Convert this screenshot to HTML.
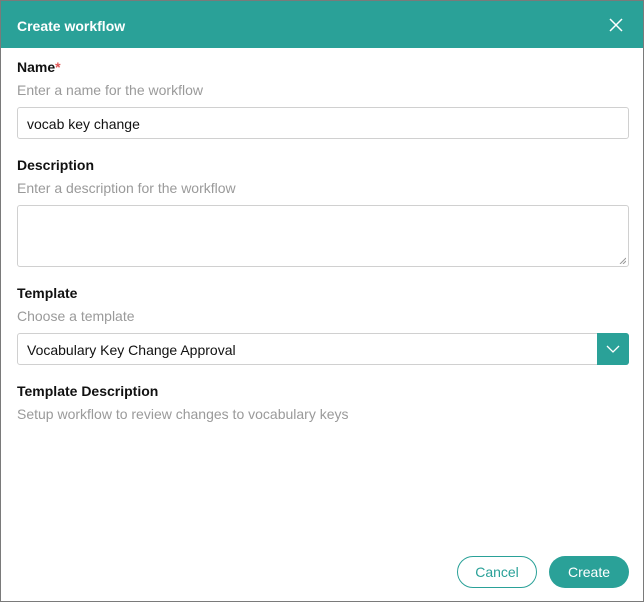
<!DOCTYPE html>
<html><head><meta charset="utf-8"><style>
*{box-sizing:border-box;margin:0;padding:0}
body{width:644px;height:602px;background:#fff;font-family:"Liberation Sans",sans-serif;position:relative;overflow:hidden}
.frame{position:absolute;left:0;top:0;width:644px;height:602px;border:1px solid #7a7a7a}
.hdr{position:absolute;left:1px;top:1px;width:642px;height:47px;background:#2aa198;color:#fff;font-weight:bold;font-size:14px;line-height:50px;padding-left:16px}
.x{position:absolute;right:20px;top:17px}
.a{position:absolute;left:17px;font-size:14px}
.lbl{font-weight:bold;color:#111}
.hint{color:#9a9a9a}
.box{position:absolute;left:17px;width:612px;border:1px solid #d0d0d0;border-radius:3px;background:#fff;font-size:14px;color:#111;padding-left:9px}
.btn{position:absolute;top:556px;height:32px;border-radius:16px;font-size:14px;text-align:center;line-height:30px}
</style></head><body>
<div class="frame"></div>
<div class="hdr">Create workflow
<svg class="x" width="14" height="14" viewBox="0 0 14 14"><path d="M1 1L13 13M13 1L1 13" stroke="#fff" stroke-width="1.5"/></svg></div>
<div class="a lbl" style="top:59px">Name<span style="color:#e05555">*</span></div>
<div class="a hint" style="top:82px">Enter a name for the workflow</div>
<div class="box" style="top:107px;height:32px;line-height:32px">vocab key change</div>
<div class="a lbl" style="top:157px">Description</div>
<div class="a hint" style="top:180px">Enter a description for the workflow</div>
<div class="box" style="top:205px;height:62px"><svg style="position:absolute;right:2px;bottom:2px" width="7" height="7"><path d="M1 7L7 1M4 7L7 4" stroke="#999"/></svg></div>
<div class="a lbl" style="top:285px">Template</div>
<div class="a hint" style="top:308px">Choose a template</div>
<div class="box" style="top:333px;height:32px;line-height:32px">Vocabulary Key Change Approval
<div style="position:absolute;right:-1px;top:-1px;width:32px;height:32px;background:#2aa198;border-radius:0 3px 3px 0"><svg width="32" height="32" style="display:block"><path d="M10 13L16 19L22 13" stroke="#fff" stroke-width="1.3" fill="none"/></svg></div></div>
<div class="a lbl" style="top:383px">Template Description</div>
<div class="a hint" style="top:406px">Setup workflow to review changes to vocabulary keys</div>
<div class="btn" style="left:457px;width:80px;border:1px solid #2aa198;color:#2aa198">Cancel</div>
<div class="btn" style="left:549px;width:80px;background:#2aa198;color:#fff;line-height:32px">Create</div>
</body></html>
